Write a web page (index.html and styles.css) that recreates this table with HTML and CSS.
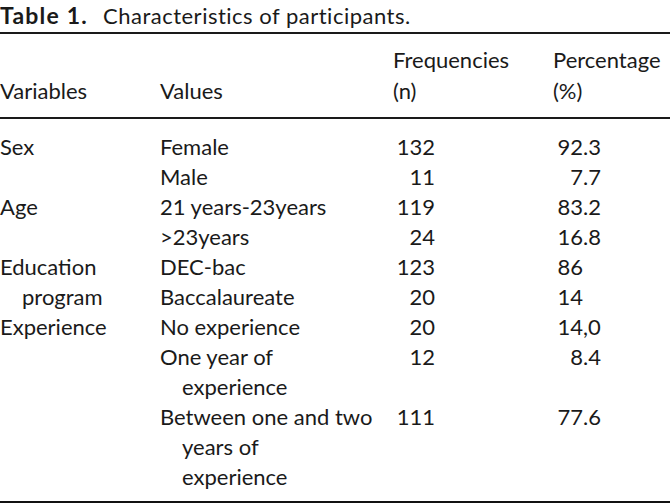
FILE: index.html
```html
<!DOCTYPE html>
<html lang="en">
<head>
<meta charset="utf-8">
<title>Table 1</title>
<link rel="stylesheet" href="styles.css">
</head>
<body>
<div class="caption"><b class="label">Table 1.</b><span class="title">Characteristics of participants.</span></div>
<table class="tbl">
  <thead>
    <tr>
      <th class="c1">Variables</th>
      <th class="c2">Values</th>
      <th class="c3">Frequencies<br>(n)</th>
      <th class="c4">Percentage<br>(%)</th>
    </tr>
  </thead>
  <tbody>
    <tr class="first">
      <td>Sex</td><td>Female</td>
      <td><span class="num">132</span></td>
      <td><span class="int">92</span><span class="frac">.3</span></td>
    </tr>
    <tr>
      <td></td><td>Male</td>
      <td><span class="num">11</span></td>
      <td><span class="int">7</span><span class="frac">.7</span></td>
    </tr>
    <tr>
      <td>Age</td><td>21 years-23years</td>
      <td><span class="num">119</span></td>
      <td><span class="int">83</span><span class="frac">.2</span></td>
    </tr>
    <tr>
      <td></td><td>&gt;23years</td>
      <td><span class="num">24</span></td>
      <td><span class="int">16</span><span class="frac">.8</span></td>
    </tr>
    <tr>
      <td rowspan="2" class="hang">Education<br>program</td><td>DEC-bac</td>
      <td><span class="num">123</span></td>
      <td><span class="int">86</span></td>
    </tr>
    <tr>
      <td>Baccalaureate</td>
      <td><span class="num">20</span></td>
      <td><span class="int">14</span></td>
    </tr>
    <tr>
      <td>Experience</td><td>No experience</td>
      <td><span class="num">20</span></td>
      <td><span class="int">14</span><span class="frac">,0</span></td>
    </tr>
    <tr>
      <td></td><td class="hang">One year of<br>experience</td>
      <td><span class="num">12</span></td>
      <td><span class="int">8</span><span class="frac">.4</span></td>
    </tr>
    <tr class="last">
      <td></td><td class="hang">Between one and two<br>years of<br>experience</td>
      <td><span class="num">111</span></td>
      <td><span class="int">77</span><span class="frac">.6</span></td>
    </tr>
  </tbody>
</table>
</body>
</html>
```
FILE: styles.css
```css
html, body {
  margin: 0;
  padding: 0;
  background: #ffffff;
}
body {
  width: 670px;
  overflow: hidden;
  font-family: Lato, "Open Sans", sans-serif;
  font-size: 22px;
  color: #1a1a1a;
}
.caption {
  height: 29px;
  padding-top: 3px;
  line-height: 24px;
  white-space: nowrap;
}
.caption .label {
  display: inline-block;
  width: 103px;
  font-size: 23px;
  font-weight: 700;
  letter-spacing: 1.2px;
}
.caption .title {
  letter-spacing: 0.5px;
}
.tbl {
  width: 670px;
  border-collapse: collapse;
  table-layout: fixed;
  border-top: 2px solid #1a1a1a;
  border-bottom: 3px solid #111111;
}
.tbl th, .tbl td {
  padding: 0;
  line-height: 30px;
  text-align: left;
  vertical-align: top;
  font-weight: 400;
  white-space: nowrap;
}
.tbl th.c1 { width: 160px; }
.tbl th.c2 { width: 233px; }
.tbl th.c3 { width: 160px; }
.tbl thead th {
  vertical-align: bottom;
  padding: 10px 0 11px;
  line-height: 31px;
}
.tbl thead tr {
  border-bottom: 2px solid #1a1a1a;
}
.tbl tr.first td { padding-top: 13px; }
.tbl tr.last td { padding-bottom: 9px; }
.hang {
  padding-left: 22px !important;
  text-indent: -22px;
}
.num {
  display: inline-block;
  width: 42px;
  text-align: right;
}
.int {
  display: inline-block;
  width: 30px;
  text-align: right;
}
```
